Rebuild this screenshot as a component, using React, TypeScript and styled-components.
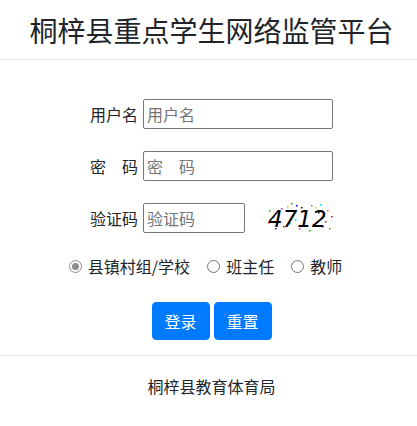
import React, { useState } from 'react';
import styled, { createGlobalStyle } from 'styled-components';

const GlobalStyle = createGlobalStyle`
  html, body {
    margin: 0;
    padding: 0;
    background: #fff;
  }
  body {
    font-family: "Noto Sans CJK SC", "Noto Sans", sans-serif;
    color: #212529;
  }
`;

const Page = styled.div`
  width: 417px;
  padding-left: 6px;
  box-sizing: border-box;
`;

const Header = styled.div`
  height: 59px;
  display: flex;
  align-items: center;
  justify-content: center;
  font-size: 28px;
  line-height: 1;
  color: #212529;
  margin-left: -6px;
  padding-left: 6px;
  border-bottom: 1px solid #e2e2e2;
`;

const Form = styled.form`
  width: 244px;
  margin: 0 auto;
  padding-top: 39px;
  padding-left: 1px;
  display: flex;
  flex-direction: column;
  gap: 22px;
`;

const Row = styled.div`
  display: flex;
  align-items: center;
  gap: 5px;
  height: 30px;
`;

const Label = styled.label`
  width: 48px;
  font-size: 16px;
  white-space: pre;
`;

const Input = styled.input<{ w: number }>`
  width: ${({ w }) => w}px;
  height: 30px;
  box-sizing: border-box;
  border: 1px solid #767676;
  border-radius: 2px;
  padding: 0 3px;
  font-family: inherit;
  font-size: 16px;
  color: #212529;
  outline: none;

  &::placeholder {
    color: #757575;
    white-space: pre;
  }
`;

const Captcha = styled.svg`
  margin-left: 15px;
  display: block;
  flex-shrink: 0;
`;

const RadioRow = styled.div`
  display: flex;
  justify-content: center;
  align-items: center;
  gap: 17px;
  margin-top: 21px;
  margin-right: 12px;
  font-size: 16px;
  line-height: 24px;
`;

const RadioItem = styled.label`
  display: flex;
  align-items: center;
  gap: 6px;
  cursor: pointer;
`;

const RadioDot = styled.span<{ checked: boolean }>`
  width: 13px;
  height: 13px;
  box-sizing: border-box;
  border-radius: 50%;
  border: 1px solid ${({ checked }) => (checked ? '#8c8c8c' : '#767676')};
  background: #fff;
  position: relative;

  &::after {
    content: '';
    display: ${({ checked }) => (checked ? 'block' : 'none')};
    position: absolute;
    left: 2px;
    top: 2px;
    width: 7px;
    height: 7px;
    border-radius: 50%;
    background: #8c8c8c;
  }
`;

const Buttons = styled.div`
  display: flex;
  justify-content: center;
  gap: 4px;
  margin-top: 24px;
  padding-bottom: 15px;
  border-bottom: 1px solid #e2e2e2;
  margin-left: -6px;
  padding-left: 6px;
`;

const Button = styled.button`
  width: 58px;
  height: 38px;
  border: 1px solid #007bff;
  border-radius: 4px;
  background: #007bff;
  color: #fff;
  font-family: inherit;
  font-size: 16px;
  padding: 0;
  cursor: pointer;
`;

const Footer = styled.div`
  text-align: center;
  font-size: 16px;
  line-height: 24px;
  padding-top: 18px;
`;

const dots: [number, number, string][] = [
  [4, 8, '#0c0'], [3, 20, '#f00'], [10, 26, '#00f'], [22, 4, '#fa0'],
  [26, 1, '#0a0'], [31, 3, '#00f'], [36, 5, '#000'], [30, 17, '#0cf'],
  [34, 26, '#f0f'], [40, 9, '#f00'], [46, 3, '#0c0'], [50, 5, '#fc0'],
  [55, 2, '#0cf'], [58, 13, '#0a0'], [60, 19, '#f00'], [57, 24, '#00f'],
  [48, 22, '#000'], [16, 6, '#f0f'], [24, 21, '#0c0'], [8, 14, '#00c'],
  [62, 8, '#f60'], [44, 28, '#0c0'], [18, 24, '#f00'], [53, 10, '#000'],
  [66, 14, '#f00'], [64, 26, '#0c0'],
];

const roles = ['县镇村组/学校', '班主任', '教师'];

const App = () => {
  const [role, setRole] = useState(0);

  return (
    <Page>
      <GlobalStyle />
      <Header>桐梓县重点学生网络监管平台</Header>
      <Form onSubmit={(e) => e.preventDefault()}>
        <Row>
          <Label>用户名</Label>
          <Input w={190} placeholder="用户名" />
        </Row>
        <Row>
          <Label>密　码</Label>
          <Input w={190} type="password" placeholder="密　码" />
        </Row>
        <Row>
          <Label>验证码</Label>
          <Input w={102} placeholder="验证码" />
          <Captcha width="70" height="32" viewBox="0 0 70 32">
            {dots.map(([x, y, c], i) => (
              <rect key={i} x={x} y={y} width="1.5" height="1.5" fill={c} />
            ))}
            <text
              x="3"
              y="25"
              fontFamily="'DejaVu Sans', sans-serif"
              fontStyle="italic"
              fontSize="23"
              fill="#000"
            >
              4712
            </text>
          </Captcha>
        </Row>
      </Form>
      <RadioRow>
        {roles.map((r, i) => (
          <RadioItem key={r} onClick={() => setRole(i)}>
            <RadioDot checked={role === i} />
            {r}
          </RadioItem>
        ))}
      </RadioRow>
      <Buttons>
        <Button>登录</Button>
        <Button>重置</Button>
      </Buttons>
      <Footer>桐梓县教育体育局</Footer>
    </Page>
  );
};

export default App;
